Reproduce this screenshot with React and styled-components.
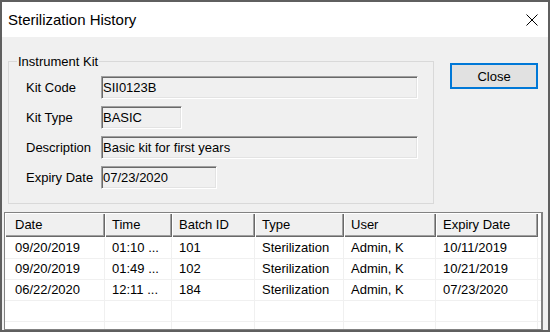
import { Fragment } from "react";
import styled, { createGlobalStyle } from "styled-components";

const GlobalStyle = createGlobalStyle`
  * { box-sizing: border-box; }
  html, body { margin: 0; padding: 0; }
  body {
    width: 550px;
    height: 332px;
    overflow: hidden;
    background: #f0f0f0;
    font-family: "Liberation Sans", Arial, sans-serif;
    font-size: 13px;
    color: #000;
  }
`;

const Window = styled.div`
  width: 550px;
  height: 332px;
  border: 2px solid #5f5f5f;
  background: #f0f0f0;
  display: flex;
  flex-direction: column;
  overflow: hidden;
`;

const TitleBar = styled.div`
  height: 35px;
  flex: none;
  background: #fff;
  display: flex;
  align-items: center;
  justify-content: space-between;
  padding: 0 10px 0 6px;
`;

const Title = styled.span`
  font-size: 15px;
  color: #000;
`;

const CloseGlyph = styled.svg`
  width: 12px;
  height: 12px;
  display: block;
`;

const Body = styled.div`
  flex: 1;
  display: flex;
  flex-direction: column;
  min-height: 0;
`;

const TopRow = styled.div`
  display: flex;
  align-items: flex-start;
  padding: 17px 0 0 6px;
`;

const GroupBox = styled.fieldset`
  width: 426px;
  margin: 0;
  padding: 0;
  min-width: 0;
  border: 1px solid #d9d9d9;
`;

const GroupTitle = styled.legend`
  margin-left: 8px;
  padding: 0 1px;
  line-height: 15px;
`;

const FieldGrid = styled.div`
  display: grid;
  grid-template-columns: 75px auto;
  grid-auto-rows: 23px;
  row-gap: 7px;
  align-items: center;
  justify-items: start;
  padding: 7px 0 14px 17px;
`;

const Label = styled.span`
  white-space: nowrap;
`;

const Field = styled.div`
  width: ${p => p.$width}px;
  height: 23px;
  line-height: 21px;
  padding-left: 1px;
  background: #f0f0f0;
  border: 1px solid;
  border-color: #a0a0a0 #fff #fff #a0a0a0;
  box-shadow: inset 1px 1px #696969, inset -1px -1px #e3e3e3;
  white-space: nowrap;
  overflow: hidden;
`;

const Button = styled.button`
  margin: 9px 0 0 16px;
  width: 88px;
  height: 26px;
  background: #e1e1e1;
  border: 2px solid #0078d7;
  font-family: inherit;
  font-size: 13px;
  color: #000;
  padding: 0;
`;

const ListView = styled.div`
  margin: 8px 0 0 2px;
  width: 539px;
  flex: 1;
  min-height: 0;
  background: #fff;
  border: 1px solid #828282;
  border-right-width: 2px;
  overflow: hidden;
`;

const HeaderRow = styled.div`
  display: flex;
  height: 24px;
`;

const HeaderCell = styled.div`
  flex: none;
  width: ${p => p.$width}px;
  height: 24px;
  line-height: 23px;
  padding-left: ${p => p.$pad}px;
  background: #f0f0f0;
  box-shadow: inset 1px 1px #fff, inset -1px -1px #696969, inset -2px -2px #a0a0a0;
  white-space: nowrap;
`;

const Rows = styled.div`
  padding-top: 1px;
`;

const Row = styled.div`
  display: flex;
  height: 21px;
  border-bottom: 1px solid #f0f0f0;
`;

const Cell = styled.div`
  flex: none;
  width: ${p => p.$width}px;
  line-height: 20px;
  padding-left: ${p => p.$pad}px;
  border-right: 1px solid #f0f0f0;
  white-space: nowrap;
  overflow: hidden;
`;

const columns = [
  { key: "date", title: "Date", width: 100, pad: 10 },
  { key: "time", title: "Time", width: 67, pad: 7 },
  { key: "batch", title: "Batch ID", width: 83, pad: 7 },
  { key: "type", title: "Type", width: 89, pad: 7 },
  { key: "user", title: "User", width: 92, pad: 7 },
  { key: "expiry", title: "Expiry Date", width: 102, pad: 7 },
];

const history = [
  { date: "09/20/2019", time: "01:10 ...", batch: "101", type: "Sterilization", user: "Admin, K", expiry: "10/11/2019" },
  { date: "09/20/2019", time: "01:49 ...", batch: "102", type: "Sterilization", user: "Admin, K", expiry: "10/21/2019" },
  { date: "06/22/2020", time: "12:11 ...", batch: "184", type: "Sterilization", user: "Admin, K", expiry: "07/23/2020" },
  {},
  {},
];

const kit = [
  { label: "Kit Code", value: "SII0123B", width: 317 },
  { label: "Kit Type", value: "BASIC", width: 81 },
  { label: "Description", value: "Basic kit for first years", width: 317 },
  { label: "Expiry Date", value: "07/23/2020", width: 116 },
];

export default function App() {
  return (
    <>
      <GlobalStyle />
      <Window>
        <TitleBar>
          <Title>Sterilization History</Title>
          <CloseGlyph viewBox="0 0 12 12">
            <path d="M0.5 0.5 L11.5 11.5 M11.5 0.5 L0.5 11.5" stroke="#000" strokeWidth="1" fill="none" />
          </CloseGlyph>
        </TitleBar>
        <Body>
          <TopRow>
            <GroupBox>
              <GroupTitle>Instrument Kit</GroupTitle>
              <FieldGrid>
                {kit.map(item => (
                  <Fragment key={item.label}>
                    <Label>{item.label}</Label>
                    <Field $width={item.width}>{item.value}</Field>
                  </Fragment>
                ))}
              </FieldGrid>
            </GroupBox>
            <Button>Close</Button>
          </TopRow>
          <ListView>
            <HeaderRow>
              {columns.map(col => (
                <HeaderCell key={col.key} $width={col.width} $pad={col.pad}>{col.title}</HeaderCell>
              ))}
            </HeaderRow>
            <Rows>
              {history.map((entry, i) => (
                <Row key={i}>
                  {columns.map(col => (
                    <Cell key={col.key} $width={col.width} $pad={col.pad}>{entry[col.key]}</Cell>
                  ))}
                </Row>
              ))}
            </Rows>
          </ListView>
        </Body>
      </Window>
    </>
  );
}
